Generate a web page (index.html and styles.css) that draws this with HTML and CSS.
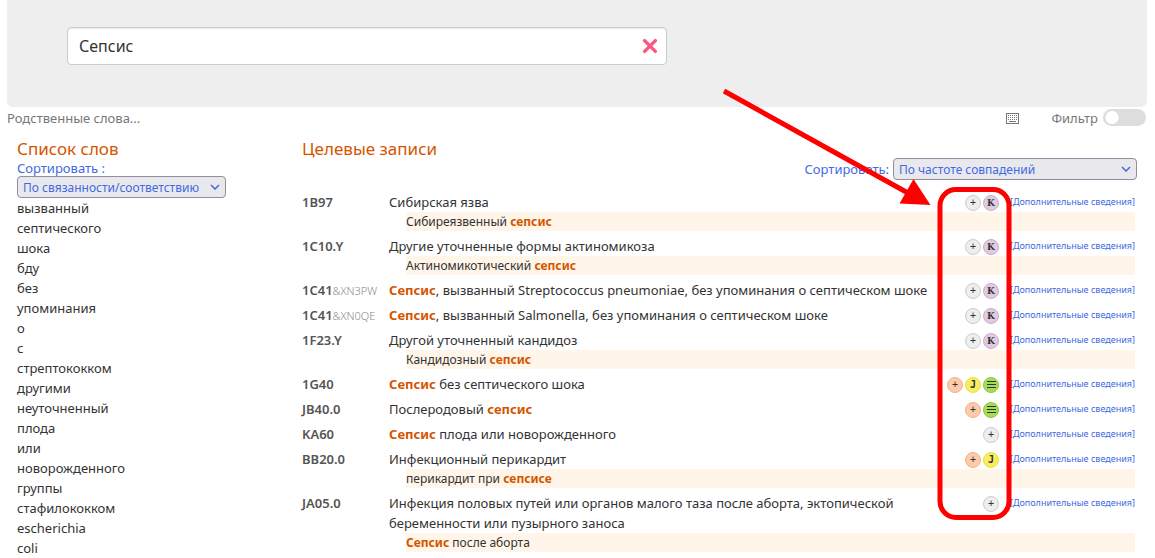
FILE: index.html
```html
<!DOCTYPE html>
<html lang="ru">
<head>
<meta charset="utf-8">
<title>Сепсис</title>
<link rel="stylesheet" href="styles.css">
</head>
<body>
<div class="page">
  <header class="search-panel">
    <div class="search-box">
      <input class="search-input" type="text" value="Сепсис" aria-label="Поиск">
      <button class="clear" type="button" aria-label="Очистить">
        <svg width="16" height="16" viewBox="0 0 16 16"><path d="M2.600 2.600 13.400 13.400M13.400 2.600 2.600 13.400" stroke="#f9577f" stroke-width="3.400" stroke-linecap="round"/></svg>
      </button>
    </div>
  </header>
  <div class="toolbar">
    <span>Родственные слова...</span>
    <div class="tools">
      <button class="keyboard" type="button" aria-label="Клавиатура">
        <svg width="13" height="11" viewBox="0 0 13 11" fill="none" stroke="#777"><rect x=".5" y=".5" width="12" height="10"/><path d="M2 2.500h9M2 4.500h9M2 6.500h9" stroke-dasharray="1 1"/><path d="M3 8.500h7"/></svg>
      </button>
      <label class="filter">Фильтр <input class="switch" type="checkbox"></label>
    </div>
  </div>
  <main class="columns">
    <section class="words">
      <h2>Список слов</h2>
      <label class="sort-label" for="word-sort">Сортировать :</label>
      <span class="select-wrap word-select"><select id="word-sort"><option>По связанности/соответствию</option></select><svg class="chevron" width="10" height="6" viewBox="0 0 10 6"><path d="M1 1l4 4 4-4"/></svg></span>
      <ul class="word-list">
        <li>вызванный</li><li>септического</li><li>шока</li><li>бду</li><li>без</li><li>упоминания</li><li>о</li><li>с</li><li>стрептококком</li><li>другими</li><li>неуточненный</li><li>плода</li><li>или</li><li>новорожденного</li><li>группы</li><li>стафилококком</li><li>escherichia</li><li>coli</li>
      </ul>
    </section>
    <section class="results">
      <h2>Целевые записи</h2>
      <div class="result-sort">
        <label class="sort-label" for="result-sort">Сортировать:</label>
        <span class="select-wrap result-select"><select id="result-sort"><option>По частоте совпадений</option></select><svg class="chevron" width="10" height="6" viewBox="0 0 10 6"><path d="M1 1l4 4 4-4"/></svg></span>
      </div>
      <div class="entries">
        <article class="entry">
          <div class="code">1B97</div>
          <div class="title">Сибирская язва</div>
          <div class="badges"><span class="badge">+</span><span class="badge purple">K</span></div>
          <a class="more" href="#">[Дополнительные сведения]</a>
          <div class="synonym">Сибиреязвенный <b>сепсис</b></div>
        </article>
        <article class="entry">
          <div class="code">1C10.Y</div>
          <div class="title">Другие уточненные формы актиномикоза</div>
          <div class="badges"><span class="badge">+</span><span class="badge purple">K</span></div>
          <a class="more" href="#">[Дополнительные сведения]</a>
          <div class="synonym">Актиномикотический <b>сепсис</b></div>
        </article>
        <article class="entry">
          <div class="code">1C41<span>&amp;XN3PW</span></div>
          <div class="title"><b>Сепсис</b>, вызванный Streptococcus pneumoniae, без упоминания о септическом шоке</div>
          <div class="badges"><span class="badge">+</span><span class="badge purple">K</span></div>
          <a class="more" href="#">[Дополнительные сведения]</a>
        </article>
        <article class="entry">
          <div class="code">1C41<span>&amp;XN0QE</span></div>
          <div class="title"><b>Сепсис</b>, вызванный Salmonella, без упоминания о септическом шоке</div>
          <div class="badges"><span class="badge">+</span><span class="badge purple">K</span></div>
          <a class="more" href="#">[Дополнительные сведения]</a>
        </article>
        <article class="entry">
          <div class="code">1F23.Y</div>
          <div class="title">Другой уточненный кандидоз</div>
          <div class="badges"><span class="badge">+</span><span class="badge purple">K</span></div>
          <a class="more" href="#">[Дополнительные сведения]</a>
          <div class="synonym">Кандидозный <b>сепсис</b></div>
        </article>
        <article class="entry">
          <div class="code">1G40</div>
          <div class="title"><b>Сепсис</b> без септического шока</div>
          <div class="badges"><span class="badge orange">+</span><span class="badge yellow">J</span><span class="badge green"><svg width="9" height="8" viewBox="0 0 9 8"><path d="M0 .5h9M0 3.500h9M0 6.500h9"/></svg></span></div>
          <a class="more" href="#">[Дополнительные сведения]</a>
        </article>
        <article class="entry">
          <div class="code">JB40.0</div>
          <div class="title">Послеродовый <b>сепсис</b></div>
          <div class="badges"><span class="badge orange">+</span><span class="badge green"><svg width="9" height="8" viewBox="0 0 9 8"><path d="M0 .5h9M0 3.500h9M0 6.500h9"/></svg></span></div>
          <a class="more" href="#">[Дополнительные сведения]</a>
        </article>
        <article class="entry">
          <div class="code">KA60</div>
          <div class="title"><b>Сепсис</b> плода или новорожденного</div>
          <div class="badges"><span class="badge">+</span></div>
          <a class="more" href="#">[Дополнительные сведения]</a>
        </article>
        <article class="entry">
          <div class="code">BB20.0</div>
          <div class="title">Инфекционный перикардит</div>
          <div class="badges"><span class="badge orange">+</span><span class="badge yellow">J</span></div>
          <a class="more" href="#">[Дополнительные сведения]</a>
          <div class="synonym">перикардит при <b>сепсисе</b></div>
        </article>
        <article class="entry">
          <div class="code">JA05.0</div>
          <div class="title">Инфекция половых путей или органов малого таза после аборта, эктопической беременности или пузырного заноса</div>
          <div class="badges"><span class="badge">+</span></div>
          <a class="more" href="#">[Дополнительные сведения]</a>
          <div class="synonym"><b>Сепсис</b> после аборта</div>
        </article>
      </div>
    </section>
  </main>
  <svg class="callout" width="295" height="436" viewBox="720 87 295 436" fill="none" stroke="#f00" aria-hidden="true">
    <path d="M724 91 908 193" stroke-width="5"/>
    <path d="M913.500 179 930.500 205 899.500 203.500Z" fill="#f00" stroke="none"/>
    <rect x="940" y="189.500" width="69" height="328" rx="16" stroke-width="5"/>
  </svg>
</div>
</body>
</html>
```
FILE: styles.css
```css
* { box-sizing: border-box; }
html { overflow: hidden; }
body {
  margin: 0 8px 0 7px;
  background: #fff;
  color: #333;
  font: 13px/20px "Noto Sans", "Open Sans", sans-serif;
}
input, select, button { font-family: inherit; color: inherit; }
button { padding: 0; border: 0; background: none; }
.page { position: relative; }
.search-panel {
  padding: 27px 60px 42px;
  border-radius: 0 0 6px 6px;
  background: #eee;
}
.search-box {
  display: flex;
  align-items: center;
  max-width: 600px;
  height: 38px;
  padding: 0 8px 0 11px;
  border: 1px solid #ccc;
  border-radius: 4px;
  background: #fff;
  box-shadow: inset 0 1px 1px #e8e8e8;
}
.search-input {
  flex: 1;
  min-width: 0;
  padding: 0;
  border: 0;
  outline: 0;
  background: transparent;
  font-size: 16px;
}
.clear svg, .keyboard svg { display: block; }
.toolbar {
  display: flex;
  justify-content: space-between;
  align-items: center;
  height: 22px;
  color: #777;
}
.tools { display: flex; align-items: center; gap: 32px; }
.filter { display: flex; align-items: center; gap: 5px; }
.switch {
  appearance: none;
  width: 43px;
  height: 17px;
  margin: 0 1px 2px 0;
  border-radius: 9px;
  background: radial-gradient(circle at 9px 50%, #fff 6px, transparent 7px) #ddd;
}
.columns {
  display: grid;
  grid-template-columns: 25% 1fr;
  padding: 8px 10px 0;
}
h2 {
  margin: 0;
  color: #d45500;
  font-size: 17px;
  font-weight: 400;
  line-height: 24px;
}
.words { display: flex; flex-direction: column; align-items: flex-start; }
.results { padding-left: 5px; }
.sort-label { color: #4169e1; font-size: 13px; line-height: 15px; }
.select-wrap { display: grid; align-items: center; }
.select-wrap > * { grid-area: 1 / 1; }
.select-wrap select {
  appearance: none;
  width: 100%;
  height: 22px;
  padding: 0 5px;
  border: 1px solid #8f8f9d;
  border-radius: 4px;
  background: #e9e9ed;
  color: #4169e1;
  font-size: 12px;
}
.chevron {
  justify-self: end;
  margin-right: 6px;
  fill: none;
  stroke: #4169e1;
  stroke-width: 1.500;
  pointer-events: none;
}
.word-select { width: 209px; }
.word-list { margin: 0; padding: 0; list-style: none; }
.result-sort {
  display: flex;
  justify-content: flex-end;
  align-items: center;
  gap: 4px;
  margin-top: -3px;
}
.result-select { width: 244px; }
.entries { padding: 12px 2px 0 0; }
.entry {
  display: grid;
  grid-template-columns: 87px 1fr auto auto;
  margin-bottom: 5px;
}
.code { color: #555; font-weight: 600; }
.code span { color: #888; font-size: 11px; font-weight: 300; line-height: 11px; }
b { color: #d45500; font-weight: 700; }
.badges { display: flex; gap: 2px; padding-top: 3px; }
.badge {
  display: flex;
  align-items: center;
  justify-content: center;
  width: 16px;
  height: 16px;
  border: 1px solid #ccc;
  border-radius: 50%;
  background: #eee;
  color: #333;
  font: 400 10px/14px "DejaVu Sans Mono", monospace;
}
.badge svg { stroke: #333; }
.purple { border-color: #ccaacc; background: #e0cce0; font-family: "DejaVu Serif", serif; font-size: 9px; font-weight: 700; }
.orange { border-color: #f5b183; background: #fbcbab; }
.yellow { border-color: #eae628; background: #f7ec66; font-weight: 700; }
.green { border-color: #8cc63f; background: #a8dc55; }
.more {
  width: 130px;
  margin-left: 6px;
  color: #4169e1;
  font-size: 9px;
  text-align: right;
  text-decoration: none;
}
.synonym {
  grid-column: 2 / -1;
  margin-left: 17px;
  background: #fff5e9;
  font-size: 12px;
  line-height: 19px;
}
.callout { position: absolute; top: 87px; right: 132px; pointer-events: none; }
```
